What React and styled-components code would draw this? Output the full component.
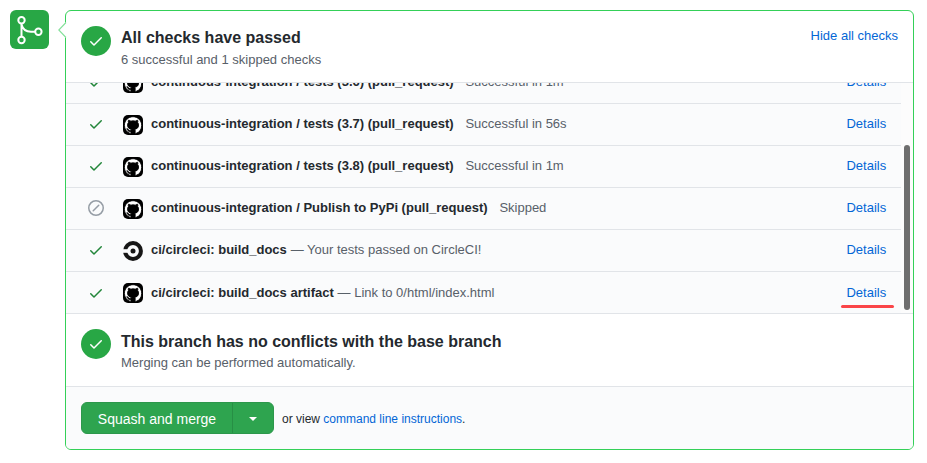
import React from "react";
import styled, { createGlobalStyle } from "styled-components";

const Global = createGlobalStyle`
  * { box-sizing: border-box; }
  body {
    margin: 0;
    background: #fff;
    color: #24292e;
    font-family: "Liberation Sans", Arial, sans-serif;
    font-size: 13px;
    line-height: 20px;
    overflow: hidden;
  }
  svg { display: block; flex: none; }
`;

const Page = styled.main`
  display: flex;
  align-items: flex-start;
  gap: 16px;
  width: 927px;
  height: 463px;
  padding: 10px 13px 13px 10px;
`;

const Badge = styled.div`
  display: flex;
  flex: none;
  width: 39px;
  height: 39px;
  border-radius: 6px;
  background: #28a745;
`;

const Panel = styled.section`
  position: relative;
  display: flex;
  flex-direction: column;
  width: 849px;
  height: 440px;
  border: 1px solid #34d058;
  border-radius: 6px;
`;

const Caret = styled.svg`
  position: absolute;
  left: -8px;
  top: 11px;
`;

const Summary = styled.div`
  display: flex;
  align-items: flex-start;
  flex: none;
  height: ${(p) => p.$height}px;
  padding: 15px 15px 0;
  border-top: ${(p) => (p.$ruled ? "1px solid #e1e4e8" : "0")};
`;

const Circle = styled.div`
  display: flex;
  align-items: center;
  justify-content: center;
  flex: none;
  width: 30px;
  height: 30px;
  margin-right: 10px;
  border-radius: 50%;
  background: #28a745;
`;

const SummaryText = styled.div`
  flex: 1;
`;

const Title = styled.h3`
  margin: 0;
  padding-top: ${(p) => (p.$low ? 1 : 0)}px;
  font-size: 16px;
  line-height: ${(p) => (p.$low ? 23 : 24)}px;
  font-weight: 700;
`;

const Sub = styled.p`
  margin: 0;
  line-height: 20px;
  color: #586069;
`;

const Link = styled.a`
  color: #0366d6;
  text-decoration: none;
`;

const CheckList = styled.div`
  display: flex;
  flex: none;
  height: 231px;
  border-top: 1px solid #e1e4e8;
  background: #fafbfc;
  overflow: hidden;
`;

const Rows = styled.div`
  display: flex;
  flex-direction: column;
  justify-content: flex-end;
  width: 835px;
  height: 230px;
  overflow: hidden;
`;

const Row = styled.div`
  display: flex;
  align-items: flex-start;
  flex: none;
  height: 42px;
  padding: 0 14.8px 0 22px;
  border-top: 1px solid #e1e4e8;
`;

const Status = styled.span`
  padding-top: ${(p) => (p.$low ? 13 : 12)}px;
`;

const Avatar = styled.span`
  padding: 11px 8px 0 19px;
`;

const Description = styled.div`
  display: flex;
  flex: 1;
  padding-top: ${(p) => (p.$low ? 11 : 10)}px;
`;

const Name = styled.strong`
  font-weight: 700;
`;

const Message = styled.span`
  flex: 1;
  margin-left: ${(p) => (p.$wide ? 11.8 : 3.8)}px;
  color: #586069;
`;

const Scrollbar = styled.div`
  width: 12px;
  padding: 62px 3px 0;
  background: #fcfcfc;
`;

const Thumb = styled.div`
  width: 6px;
  height: 165px;
  border-radius: 3px;
  background: #6e6e6e;
`;

const Marked = styled(Link)`
  position: relative;
  &::after {
    content: "";
    position: absolute;
    left: -5.6px;
    top: 22px;
    width: 53px;
    height: 3px;
    border-radius: 2px;
    background: #fa4548;
  }
`;

const Footer = styled.div`
  display: flex;
  align-items: flex-start;
  flex: 1;
  padding: 15px 15px 0;
  border-top: 1px solid #e1e4e8;
  border-radius: 0 0 5px 5px;
  background: #fafbfc;
`;

const ButtonGroup = styled.div`
  display: flex;
  width: 193px;
  height: 32px;
  border: 1px solid #2c974b;
  border-radius: 6px;
  background: #2ea44f;
  overflow: hidden;
`;

const MergeButton = styled.button`
  display: flex;
  align-items: center;
  justify-content: center;
  width: ${(p) => p.$width}px;
  padding: 2px 0 0;
  border: 0;
  border-left: ${(p) => (p.$divided ? "1px solid #278f45" : "0")};
  background: transparent;
  color: #fff;
  font: 14px "Liberation Sans", Arial, sans-serif;
`;

const Hint = styled.span`
  margin: 7px 0 0 8px;
  font-size: 12px;
  line-height: 20px;
`;

const Check = ({ color }) => (
  <svg width="16" height="16" viewBox="0 0 16 16" fill={color}>
    <path d="M13.78 4.22a.75.75 0 010 1.06l-7.25 7.25a.75.75 0 01-1.06 0L2.22 9.28a.75.75 0 011.06-1.06L6 10.94l6.72-6.72a.75.75 0 011.06 0z" />
  </svg>
);

const Skip = () => (
  <svg width="16" height="16" viewBox="0 0 16 16" fill="#959da5">
    <path fillRule="evenodd" d="M1.5 8a6.5 6.5 0 1113 0 6.5 6.5 0 01-13 0zM8 0a8 8 0 100 16A8 8 0 008 0zm3.28 5.78a.75.75 0 00-1.06-1.06l-5.5 5.5a.75.75 0 101.06 1.06l5.5-5.5z" />
  </svg>
);

const GitHub = () => (
  <svg width="20" height="20" viewBox="0 0 20 20">
    <rect width="20" height="20" rx="5" fill="#000" />
    <path transform="translate(1.4 1.7) scale(1.08)" fill="#fff" stroke="#000" strokeWidth=".8" d="M8 0C3.58 0 0 3.58 0 8c0 3.54 2.29 6.53 5.47 7.59.4.07.55-.17.55-.38 0-.19-.01-.82-.01-1.49-2.01.37-2.53-.49-2.69-.94-.09-.23-.48-.94-.82-1.13-.28-.15-.68-.52-.01-.53.63-.01 1.08.58 1.23.82.72 1.21 1.87.87 2.33.66.07-.52.28-.87.51-1.07-1.78-.2-3.64-.89-3.64-3.95 0-.87.31-1.59.82-2.15-.08-.2-.36-1.02.08-2.12 0 0 .67-.21 2.2.82.64-.18 1.32-.27 2-.27.68 0 1.36.09 2 .27 1.53-1.04 2.2-.82 2.2-.82.44 1.1.16 1.92.08 2.12.51.56.82 1.27.82 2.15 0 3.07-1.87 3.75-3.65 3.95.29.25.54.73.54 1.48 0 1.07-.01 1.93-.01 2.2 0 .21.15.46.55.38A8.013 8.013 0 0016 8c0-4.42-3.58-8-8-8z" />
  </svg>
);

const CircleCI = () => (
  <svg width="20" height="20" viewBox="0 0 20 20">
    <circle cx="10" cy="10" r="7.9" fill="none" stroke="#161616" strokeWidth="4" />
    <path d="M0 8.2h6v3.6H0z" fill="#fafbfc" />
    <circle cx="10" cy="10" r="2.5" fill="#161616" />
  </svg>
);

const checks = [
  { name: "continuous-integration / tests (3.6) (pull_request)", message: "Successful in 1m", wide: true },
  { name: "continuous-integration / tests (3.7) (pull_request)", message: "Successful in 56s", wide: true },
  { name: "continuous-integration / tests (3.8) (pull_request)", message: "Successful in 1m", wide: true },
  { name: "continuous-integration / Publish to PyPi (pull_request)", message: "Skipped", wide: true, skipped: true },
  { name: "ci/circleci: build_docs", message: "— Your tests passed on CircleCI!", circle: true },
  { name: "ci/circleci: build_docs artifact", message: "— Link to 0/html/index.html", marked: true },
];

export default function App() {
  return (
    <>
      <Global />
      <Page>
        <Badge>
          <svg width="39" height="39" viewBox="0 0 39 39" fill="none" stroke="#fff" strokeWidth="2">
            <circle cx="11.5" cy="10.3" r="3.2" />
            <circle cx="11.5" cy="30" r="3.2" />
            <circle cx="28.4" cy="21.7" r="3.2" />
            <path d="M11.5 13.5v13.3M11.5 14.5c1.2 4.8 5 7.2 9.5 7.2h4.2" />
          </svg>
        </Badge>
        <Panel>
          <Caret width="9" height="16" viewBox="0 0 9 16">
            <path d="M8 0L.8 8 8 16H9V0z" fill="#fff" />
            <path d="M8 .5L.8 8 8 15.5" fill="none" stroke="#85e09b" strokeWidth="1.1" />
          </Caret>
          <Summary $height={71}>
            <Circle><Check color="#fff" /></Circle>
            <SummaryText>
              <Title>All checks have passed</Title>
              <Sub>6 successful and 1 skipped checks</Sub>
            </SummaryText>
            <Link>Hide all checks</Link>
          </Summary>
          <CheckList>
            <Rows>
              {checks.map((c) => (
                <Row key={c.name}>
                  <Status $low={c.marked}>{c.skipped ? <Skip /> : <Check color="#22863a" />}</Status>
                  <Avatar>{c.circle ? <CircleCI /> : <GitHub />}</Avatar>
                  <Description $low={c.marked}>
                    <Name>{c.name}</Name>
                    <Message $wide={c.wide}>{c.message}</Message>
                    {c.marked ? <Marked>Details</Marked> : <Link>Details</Link>}
                  </Description>
                </Row>
              ))}
            </Rows>
            <Scrollbar><Thumb /></Scrollbar>
          </CheckList>
          <Summary $height={73} $ruled>
            <Circle><Check color="#fff" /></Circle>
            <SummaryText>
              <Title $low>This branch has no conflicts with the base branch</Title>
              <Sub>Merging can be performed automatically.</Sub>
            </SummaryText>
          </Summary>
          <Footer>
            <ButtonGroup>
              <MergeButton $width={150}>Squash and merge</MergeButton>
              <MergeButton $width={41} $divided aria-label="Select merge method">
                <svg width="8" height="4" viewBox="0 0 8 4"><path d="M0 0h8L4 4z" fill="#fff" /></svg>
              </MergeButton>
            </ButtonGroup>
            <Hint>or view <Link>command line instructions</Link>.</Hint>
          </Footer>
        </Panel>
      </Page>
    </>
  );
}
